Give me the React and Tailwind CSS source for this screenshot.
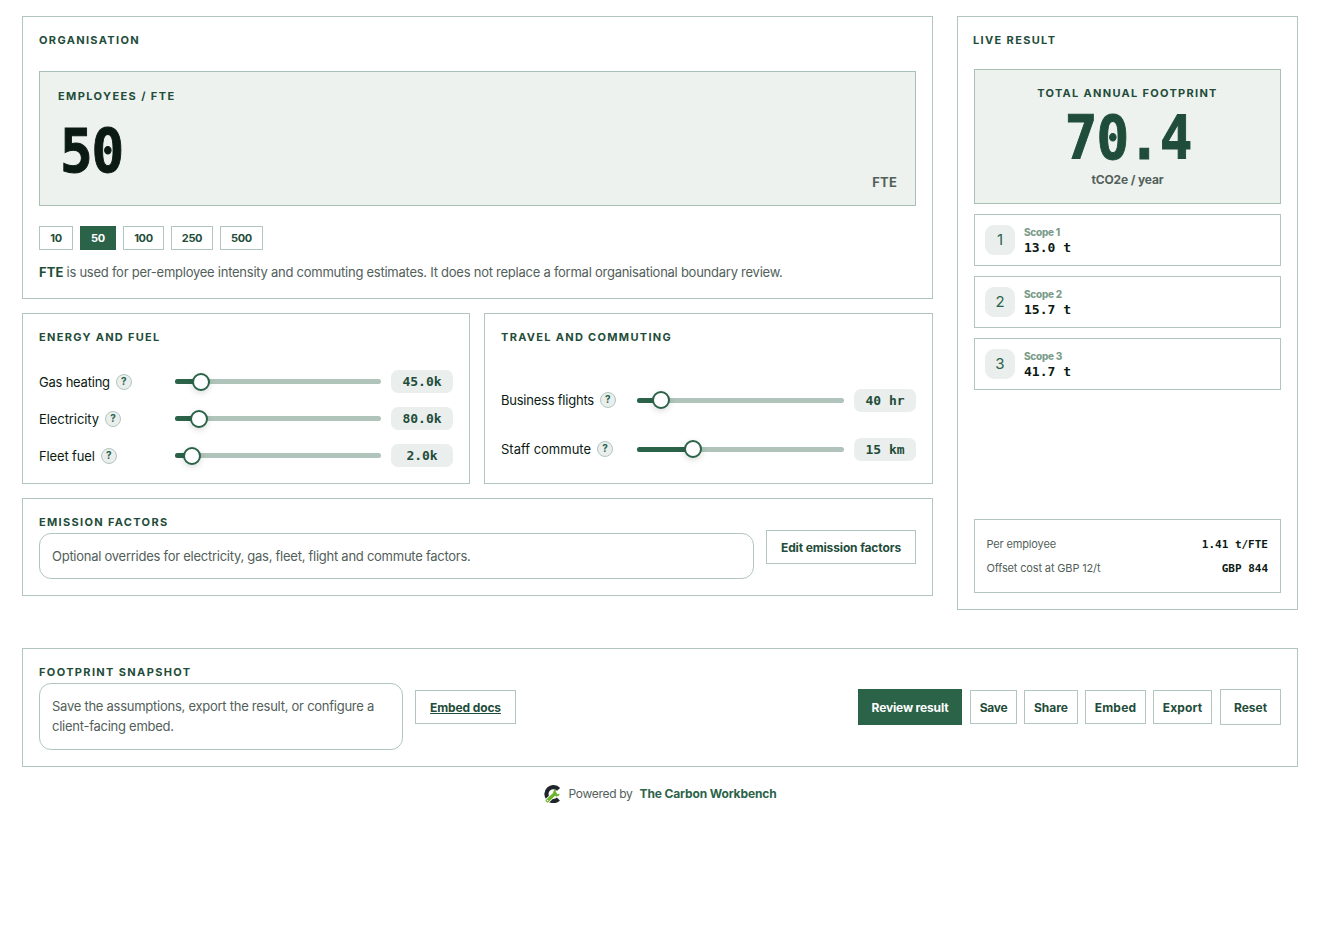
import React from "react";

const mono = "font-['DejaVu_Sans_Mono','Liberation_Mono',monospace] font-bold";
const panel = "border border-[#b0c6bf] bg-white";
const heading = "text-[11px] font-bold leading-4 text-[#1f4d3a] whitespace-nowrap";
const button =
  "flex items-center justify-center border border-[#b0c6bf] bg-white pt-0.5 text-[12px] font-bold whitespace-nowrap text-[#1f4d3a]";
const figure =
  "scale-x-[0.89] text-[61px] leading-[64px] tracking-[-1.2px] [-webkit-text-stroke-width:1px]";

function Slider({ label, tracking, value, fill, height, labelPad, valuePad }) {
  return (
    <div className={`flex items-center ${height}`}>
      <div className={`flex w-[136px] shrink-0 items-center gap-1.5 ${labelPad}`}>
        <span className={`text-[13px] leading-5 whitespace-nowrap text-[#0b1a13] ${tracking}`}>{label}</span>
        <span className="flex size-4 shrink-0 items-center justify-center rounded-full border border-[#b0c6bf] bg-[#eaeeec] pb-px text-[10px] font-bold text-[#2b6349]">
          ?
        </span>
      </div>
      <div className="relative h-[5px] flex-1 rounded-full bg-[#b0c4bb]">
        <div className="h-full rounded-full bg-[#2b6349]" style={{ width: fill }} />
        <div
          className="absolute top-1/2 size-[18px] -translate-x-1/2 -translate-y-1/2 rounded-full border-2 border-[#2b6349] bg-white shadow-[0_2px_6px_rgba(0,0,0,0.15)]"
          style={{ left: fill }}
        />
      </div>
      <div
        className={`ml-2.5 flex h-[23px] w-[62px] shrink-0 items-center justify-center rounded-[7px] bg-[#eaeeec] text-[13px] tracking-[-0.03px] whitespace-pre text-[#1f4d3a] ${valuePad} ${mono}`}
      >
        {value}
      </div>
    </div>
  );
}

function Chip({ children, width, active }) {
  return (
    <div
      className={`flex h-6 items-center justify-center border text-[11px] font-bold tracking-[-0.3px] ${width} ${
        active ? "border-[#2b6349] bg-[#2b6349] text-white" : "border-[#b0c6bf] text-[#1f4d3a]"
      }`}
    >
      {children}
    </div>
  );
}

function Scope({ n, value }) {
  return (
    <div className="flex h-[52px] items-center gap-[9px] border border-[#b0c6bf] px-2.5">
      <div className="flex size-[30px] items-center justify-center rounded-[9px] bg-[#eaeeec] text-[15px] text-[#2b6349]">
        {n}
      </div>
      <div className="pt-0.5">
        <div className="h-3.5 text-[10px] leading-[13px] font-extrabold tracking-[-0.25px] text-[#7a9c8a]">Scope {n}</div>
        <div className={`text-[13px] leading-4 whitespace-pre text-[#0b1a13] ${mono}`}>{value}</div>
      </div>
    </div>
  );
}

function Logo() {
  return (
    <svg className="size-[18px]" viewBox="0 0 18 18" fill="none">
      <path d="M15.6 4.4A7 7 0 1 0 15.4 14" stroke="#20242b" strokeWidth="4.2" />
      <path d="M3.4 16.6 11.8 8.6" stroke="#fff" strokeWidth="5" />
      <path d="M4.4 15.7 12 8.5" stroke="#6fb52c" strokeWidth="3.4" strokeLinecap="round" />
      <path d="M13.4 4.6a3.4 3.4 0 1 0 3.4 4.2l-2.6.4-1.8-1.7z" fill="#6fb52c" />
      <circle cx="4.6" cy="15.5" r=".8" fill="#fff" />
    </svg>
  );
}

export default function App() {
  return (
    <div className="min-h-[940px] bg-white px-[22px] pt-4 font-['Inter','Liberation_Sans',sans-serif]">
      <div className="flex items-start gap-6">
        <div className="flex w-[911px] flex-col">
          <section className={`h-[283px] px-4 pt-[15px] ${panel}`}>
            <h2 className={`${heading} tracking-[1.34px]`}>ORGANISATION</h2>
            <div className="mt-[23px] flex h-[135px] border border-[#a9c0b6] bg-[#eef2ef] px-[18px] pt-4">
              <div className="flex-1">
                <div className={`${heading} tracking-[1.4px]`}>EMPLOYEES / FTE</div>
                <div className={`mt-[15px] ml-0.5 w-max origin-left text-[#0b1a13] ${figure} ${mono}`}>50</div>
              </div>
              <div className="mt-[84px] h-5 text-[13px] leading-5 font-bold tracking-[0.2px] text-[#52605a]">FTE</div>
            </div>
            <div className="mt-5 flex gap-[7px]">
              <Chip width="w-[34px]">10</Chip>
              <Chip width="w-[36px]" active>50</Chip>
              <Chip width="w-[41px]">100</Chip>
              <Chip width="w-[42px]">250</Chip>
              <Chip width="w-[43px]">500</Chip>
            </div>
            <p className="mt-3 text-[13px] leading-5 tracking-[-0.25px] whitespace-nowrap text-[#52605a]">
              <strong className="mr-[3px] font-bold tracking-[0.1px] text-[#1f4d3a]">FTE</strong>
              is used for per-employee intensity and commuting estimates. It does not replace a formal organisational
              boundary review.
            </p>
          </section>

          <div className="mt-3.5 flex gap-3.5">
            <section className={`h-[171px] w-[448px] px-4 pt-[15px] ${panel}`}>
              <h2 className={`${heading} tracking-[1.3px]`}>ENERGY AND FUEL</h2>
              <div className="mt-[18px]">
                <Slider height="h-[37px]" labelPad="pt-px" valuePad="pt-0" label="Gas heating" tracking="tracking-[-0.22px]" value="45.0k" fill="12.6%" />
                <Slider height="h-[37px]" labelPad="pt-px" valuePad="pt-0" label="Electricity" tracking="tracking-[-0.08px]" value="80.0k" fill="11.6%" />
                <Slider height="h-[37px]" labelPad="pt-px" valuePad="pt-0" label="Fleet fuel" tracking="tracking-[-0.14px]" value="2.0k" fill="8.2%" />
              </div>
            </section>
            <section className={`h-[171px] flex-1 px-4 pt-[15px] ${panel}`}>
              <h2 className={`${heading} tracking-[1.3px]`}>TRAVEL AND COMMUTING</h2>
              <div className="mt-[31px] flex flex-col gap-px">
                <Slider height="h-[48px]" labelPad="pt-0" valuePad="pt-px" label="Business flights" tracking="tracking-[-0.23px]" value="40 hr" fill="11.6%" />
                <Slider height="h-[48px]" labelPad="pt-0" valuePad="pt-px" label="Staff commute" tracking="tracking-[-0.01px]" value="15 km" fill="27%" />
              </div>
            </section>
          </div>

          <section className={`mt-3.5 flex h-[98px] items-start gap-3 px-4 pt-[15px] ${panel}`}>
            <div className="w-[715px]">
              <h2 className={`${heading} tracking-[1.33px]`}>EMISSION FACTORS</h2>
              <div className="mt-[3px] flex h-[46px] items-center rounded-xl border border-[#b0c6bf] px-3 pt-px text-[13px] tracking-[-0.26px] text-[#52605a]">
                Optional overrides for electricity, gas, fleet, flight and commute factors.
              </div>
            </div>
            <div className={`mt-4 h-[34px] w-[150px] tracking-[-0.14px] ${button}`}>Edit emission factors</div>
          </section>
        </div>

        <aside className={`flex h-[594px] w-[341px] flex-col px-4 pt-[15px] pb-4 ${panel}`}>
          <h2 className={`${heading} -ml-px tracking-[1.35px]`}>LIVE RESULT</h2>
          <div className="mt-[21px] flex h-[135px] flex-col items-center border border-[#a9c0b6] bg-[#eef2ef] pt-[15px]">
            <div className={`${heading} tracking-[1.3px]`}>TOTAL ANNUAL FOOTPRINT</div>
            <div className={`mt-[5px] ml-0.5 text-[#1f4d3a] ${figure} ${mono}`}>70.4</div>
            <div className="mt-0.5 text-[12px] leading-4 font-bold tracking-[-0.15px] text-[#52605a]">tCO2e / year</div>
          </div>
          <div className="mt-2.5 flex flex-col gap-2.5">
            <Scope n="1" value="13.0 t" />
            <Scope n="2" value="15.7 t" />
            <Scope n="3" value="41.7 t" />
          </div>
          <div className="mt-auto flex h-[74px] flex-col justify-center border border-[#b0c6bf] pr-3 pl-[11.5px] text-[11px] leading-6 text-[#52605a]">
            <div className="flex justify-between">
              <span className="tracking-[-0.15px]">Per employee</span>
              <span className={`h-6 pt-px text-[#0b1a13] ${mono}`}>1.41 t/FTE</span>
            </div>
            <div className="flex justify-between">
              <span className="tracking-[-0.15px]">Offset cost at GBP 12/t</span>
              <span className={`h-6 pt-px text-[#0b1a13] ${mono}`}>GBP 844</span>
            </div>
          </div>
        </aside>
      </div>

      <section className={`mt-[38px] flex h-[119px] items-start px-4 pt-[15px] ${panel}`}>
        <div className="w-[364px]">
          <h2 className={`${heading} tracking-[1.36px]`}>FOOTPRINT SNAPSHOT</h2>
          <div className="mt-[3px] flex h-[67px] items-center rounded-xl border border-[#b0c6bf] px-3 pb-px text-[13px] leading-5 tracking-[-0.26px] text-[#52605a]">
            <p>
              Save the assumptions, export the result, or configure a
              <br />
              client-facing embed.
            </p>
          </div>
        </div>
        <div className={`mt-[26px] ml-3 h-[34px] w-[101px] tracking-[-0.12px] underline ${button}`}>Embed docs</div>
        <div className="mt-[25px] ml-auto flex items-center">
          <div className="mr-2 flex h-9 w-[104px] items-center justify-center bg-[#2b6349] pt-0.5 text-[12px] font-bold tracking-[-0.16px] text-white">
            Review result
          </div>
          <div className={`mr-[7px] h-[34px] w-[47px] tracking-[-0.3px] ${button}`}>Save</div>
          <div className={`mr-[7px] h-[34px] w-[54px] ${button}`}>Share</div>
          <div className={`mr-[7px] h-[34px] w-[61px] tracking-[0.2px] ${button}`}>Embed</div>
          <div className={`mr-2 h-[34px] w-[59px] tracking-[0.15px] ${button}`}>Export</div>
          <div className={`h-9 w-[61px] ${button}`}>Reset</div>
        </div>
      </section>

      <footer className="mt-[17px] flex h-5 items-center justify-center text-[12px] text-[#52605a]">
        <Logo />
        <span className="ml-[7px] tracking-[-0.3px]">Powered by</span>
        <span className="ml-[7px] font-bold tracking-[-0.13px] text-[#2b6349]">The Carbon Workbench</span>
      </footer>
    </div>
  );
}
